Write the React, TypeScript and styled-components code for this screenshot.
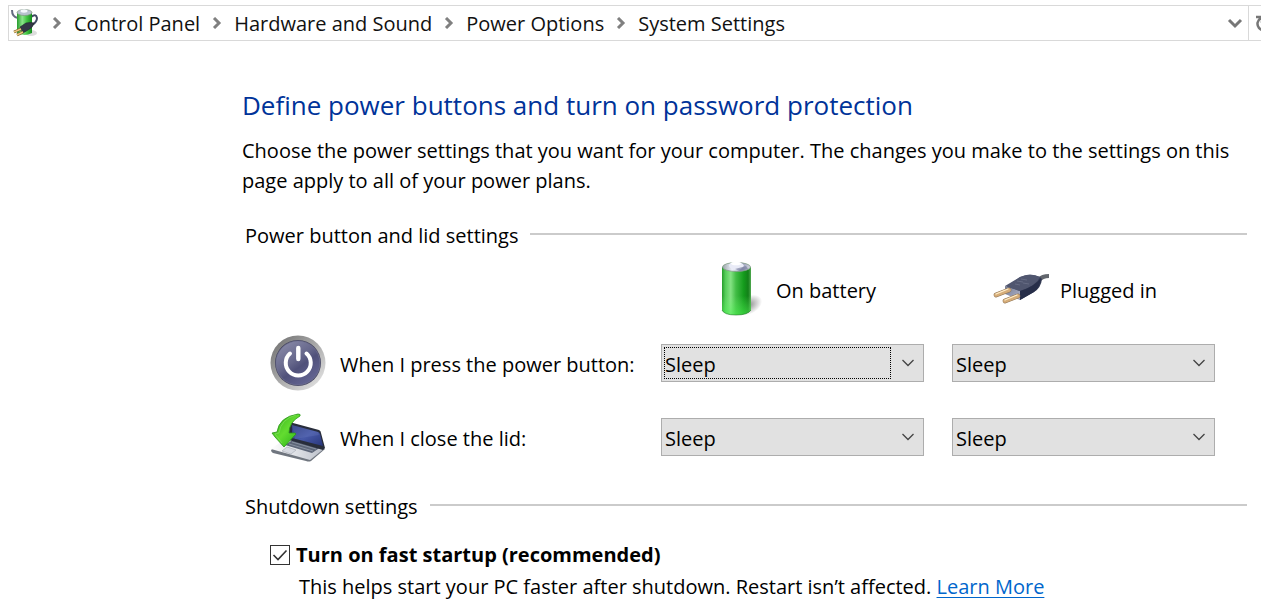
import React, { useState } from "react";
import styled, { createGlobalStyle } from "styled-components";

const GlobalStyle = createGlobalStyle`
  * { box-sizing: border-box; }
  body {
    margin: 0;
    background: #fff;
    color: #000;
    font-family: "Open Sans", "Noto Sans", sans-serif;
    font-size: 20px;
    line-height: 30px;
    overflow-x: hidden;
  }
  svg { flex: none; }
`;

const AddressBar = styled.nav`
  display: flex;
  align-items: stretch;
  height: 36px;
  margin: 5px 0 0 8px;
  border: 1px solid #d9d9d9;
  border-right: 0;
  overflow: hidden;
`;

const Trail = styled.ol`
  display: flex;
  flex: 1;
  align-items: center;
  min-width: 0;
  margin: 0;
  padding: 0 0 0 1px;
  list-style: none;
  white-space: nowrap;
`;

const Crumb = styled.li`
  display: flex;
  align-items: center;
`;

const CrumbLink = styled.a`
  padding-top: 2px;
  color: #111;
  text-decoration: none;
`;

const Separator = styled.svg`
  width: 10px;
  height: 12px;
  margin: 0 12px;
  fill: none;
  stroke: #808080;
  stroke-width: 3;
`;

const BarButton = styled.button<{ $width: number; $divided?: boolean }>`
  display: flex;
  flex: none;
  align-items: center;
  justify-content: ${(p) => (p.$divided ? "flex-start" : "center")};
  width: ${(p) => p.$width}px;
  padding: 0;
  overflow: hidden;
  border: 0;
  border-left: ${(p) => (p.$divided ? "1px solid #d9d9d9" : "0")};
  background: none;
  svg { margin-left: ${(p) => (p.$divided ? "6px" : "0")}; }
`;

const Main = styled.main`
  padding: 46px 14px 0 242px;
`;

const Title = styled.h1`
  margin: 0 0 13px;
  color: #003399;
  font-size: 26px;
  font-weight: 400;
  line-height: 36px;
`;

const Intro = styled.p`
  margin: 0;
`;

const Section = styled.section`
  margin-top: 25px;
`;

const SectionTitle = styled.h2`
  display: flex;
  align-items: center;
  gap: 12px;
  margin: 0;
  padding-left: 3px;
  font-size: 20px;
  font-weight: 400;
  &::after {
    content: "";
    flex: 1;
    height: 2px;
    margin-bottom: 4px;
    background: #cbcbcb;
  }
`;

const SettingsGrid = styled.div`
  display: grid;
  grid-template-columns: 363px 1fr 1fr;
  grid-auto-rows: 56px;
  align-items: center;
  gap: 18px 28px;
  padding: 10px 32px 2px 28px;
`;

const Source = styled.div<{ $indent: number; $gap: number }>`
  display: flex;
  align-items: center;
  gap: ${(p) => p.$gap}px;
  padding-left: ${(p) => p.$indent}px;
  span { padding-top: 4px; }
`;

const RowLabel = styled.div`
  display: flex;
  align-items: center;
  gap: 14px;
  white-space: nowrap;
  label { padding-top: 4px; }
`;

const SelectBox = styled.div`
  position: relative;
  svg {
    position: absolute;
    top: 13px;
    right: 9px;
    pointer-events: none;
  }
`;

const Select = styled.select`
  display: block;
  width: 100%;
  height: 38px;
  padding: 4px 32px 0 3px;
  appearance: none;
  border: 1px solid #adadad;
  border-radius: 0;
  outline: 0;
  background: #e1e1e1;
  color: #000;
  font: inherit;
`;

const FocusRing = styled.span`
  position: absolute;
  inset: 3px 33px 3px 3px;
  border: 1px dotted #000;
  pointer-events: none;
`;

const Option = styled.div`
  display: grid;
  grid-template-columns: 20px 1fr;
  align-items: center;
  gap: 2px 6px;
  padding: 18px 0 6px 28px;
`;

const CheckBox = styled.span`
  position: relative;
  display: block;
  height: 20px;
  svg {
    position: absolute;
    inset: 0;
    pointer-events: none;
  }
`;

const CheckInput = styled.input`
  display: block;
  width: 20px;
  height: 20px;
  margin: 0;
  appearance: none;
  border: 1px solid #333;
  background: #fff;
`;

const OptionLabel = styled.label`
  font-weight: 700;
`;

const Hint = styled.p`
  grid-column: 2;
  margin: 0;
  padding-left: 3px;
`;

const Link = styled.a`
  color: #0066cc;
  text-decoration-thickness: 1px;
  text-underline-offset: 3px;
`;

const PowerOptionsIcon = () => (
  <svg width="30" height="30" viewBox="0 0 30 30" aria-hidden="true">
    <defs>
      <linearGradient id="miniGreen">
        <stop offset="0" stopColor="#279c2e" />
        <stop offset=".35" stopColor="#8be58a" />
        <stop offset=".65" stopColor="#43c544" />
        <stop offset="1" stopColor="#138b1d" />
      </linearGradient>
    </defs>
    <ellipse cx="21" cy="25" rx="6" ry="3" fill="#ddd" />
    <path d="M2 2q0 7 6 8" fill="none" stroke="#656b82" strokeWidth="2" />
    <path d="M21 9q5-4 6 1 0 4-5 7" fill="none" stroke="#414963" strokeWidth="2" />
    <path d="M7 4v21q7 4 15 0V4z" fill="url(#miniGreen)" />
    <ellipse cx="14.500" cy="4.500" rx="7.500" ry="3" fill="#b8c2cf" stroke="#7c9580" strokeWidth=".7" />
    <ellipse cx="14" cy="3" rx="3.500" ry="1.700" fill="#f4f6fc" />
    <path d="M10 19l6-4q5-1 8 0-1 5-6 7l-5 3z" fill="#333745" stroke="#20242e" strokeWidth=".6" />
    <path d="M11 21l-7 3M13 24l-6 3" stroke="#765622" strokeWidth="2.600" />
    <path d="M11 21l-7 3M13 24l-6 3" stroke="#ecc980" strokeWidth="1.400" />
  </svg>
);

const BatteryIcon = () => (
  <svg width="42" height="56" viewBox="0 0 42 56" aria-hidden="true">
    <defs>
      <linearGradient id="cell">
        <stop offset="0" stopColor="#259c2b" />
        <stop offset=".12" stopColor="#55cd59" />
        <stop offset=".3" stopColor="#84e283" />
        <stop offset=".48" stopColor="#42bd46" />
        <stop offset=".75" stopColor="#149b1c" />
        <stop offset=".9" stopColor="#138019" />
        <stop offset="1" stopColor="#50a950" />
      </linearGradient>
      <linearGradient id="cellGlow" x1="0" y1="0" x2="0" y2="1">
        <stop offset=".6" stopColor="#6eff6e" stopOpacity="0" />
        <stop offset="1" stopColor="#4df551" stopOpacity=".55" />
      </linearGradient>
      <linearGradient id="cap">
        <stop offset="0" stopColor="#9ba6aa" />
        <stop offset=".35" stopColor="#eef0fa" />
        <stop offset=".7" stopColor="#9599b8" />
        <stop offset="1" stopColor="#d3d7df" />
      </linearGradient>
      <radialGradient id="cellShadow">
        <stop offset="0" stopColor="#555" stopOpacity=".65" />
        <stop offset="1" stopColor="#555" stopOpacity="0" />
      </radialGradient>
    </defs>
    <ellipse cx="28" cy="44" rx="14" ry="9" fill="url(#cellShadow)" transform="rotate(-28 28 44)" />
    <path d="M1 6v43q2 5 14 5t15-5V6z" fill="url(#cell)" />
    <path d="M1 6v43q2 5 14 5t15-5V6z" fill="url(#cellGlow)" />
    <path d="M1 49q2 5 14 5t15-5" fill="none" stroke="#257d2a" strokeOpacity=".6" />
    <ellipse cx="15.500" cy="6" rx="14" ry="4.500" fill="url(#cap)" stroke="#829c86" strokeWidth=".8" />
    <path d="M8 5q0-4 7-4t8 4q-3 4-8 4T8 5z" fill="#e9ebf7" />
    <path d="M14 8l11-3 2 3-8 2z" fill="#777c9c" opacity=".65" />
    <ellipse cx="15" cy="2.500" rx="5" ry="1.800" fill="#fff" />
  </svg>
);

const PlugIcon = () => (
  <svg width="56" height="34" viewBox="0 0 56 34" aria-hidden="true">
    <defs>
      <linearGradient id="plugBody" x1="0" y1="0" x2="1" y2="1">
        <stop offset="0" stopColor="#6b718c" />
        <stop offset=".45" stopColor="#404761" />
        <stop offset="1" stopColor="#20263d" />
      </linearGradient>
      <linearGradient id="plugFace" x1="0" y1="0" x2="1" y2="1">
        <stop offset="0" stopColor="#747b91" />
        <stop offset="1" stopColor="#b1b5cd" />
      </linearGradient>
    </defs>
    <path d="M45 6q3-4 11-4v4q-6 0-9 4z" fill="#62666d" />
    <path d="M12 16L27 5q11-4 20 0l2 2q-1 9-8 13L27 28z" fill="url(#plugBody)" />
    <path d="M12 14l15 5v9l-15-6z" fill="url(#plugFace)" />
    <path d="M12 14L27 5q10-5 20 0-4 9-20 14z" fill="#50566f" />
    <path d="M27 19q14-4 21-13-1 9-7 14l-14 8z" fill="#272e49" />
    <path d="M24 9l6 1m-2-3l6 1m-12 4l5 1m3-2l6 1" stroke="#666c84" strokeWidth="1" />
    <path d="M16 18L3 23M25 24l-13 5" stroke="#8e7354" strokeWidth="4.600" strokeLinecap="round" />
    <path d="M16 18L3 23M25 24l-13 5" stroke="#d6ad79" strokeWidth="3.600" strokeLinecap="round" />
    <path d="M15 17L3 22M24 23l-12 5" stroke="#ffedc9" strokeWidth="1.300" strokeLinecap="round" />
  </svg>
);

const PowerIcon = () => (
  <svg width="56" height="56" viewBox="0 0 56 56" aria-hidden="true">
    <defs>
      <linearGradient id="rim" x1=".1" y1=".1" x2=".9" y2=".9">
        <stop offset="0" stopColor="#777" />
        <stop offset=".5" stopColor="#aaa" />
        <stop offset="1" stopColor="#e0e0e0" />
      </linearGradient>
      <linearGradient id="face" x1=".1" y1="0" x2=".8" y2="1">
        <stop offset="0" stopColor="#8c8dab" />
        <stop offset=".45" stopColor="#66678b" />
        <stop offset=".6" stopColor="#50517a" />
        <stop offset="1" stopColor="#666796" />
      </linearGradient>
    </defs>
    <circle cx="28" cy="28" r="27.500" fill="url(#rim)" />
    <circle cx="28" cy="28" r="23" fill="#44445f" />
    <circle cx="28" cy="28" r="22" fill="url(#face)" stroke="#77799a" strokeWidth=".6" />
    <path d="M20 18.500a12.500 12.500 0 1 0 16.500 0" fill="none" stroke="#fff" strokeWidth="4" strokeLinecap="round" />
    <path d="M28.300 13v11" stroke="#fff" strokeWidth="4.400" strokeLinecap="round" />
  </svg>
);

const LidIcon = () => (
  <svg width="56" height="50" viewBox="0 0 56 50" aria-hidden="true">
    <defs>
      <linearGradient id="screen" x1="0" y1="0" x2="1" y2="1">
        <stop offset="0" stopColor="#2b397a" />
        <stop offset=".5" stopColor="#4759a8" />
        <stop offset="1" stopColor="#27357a" />
      </linearGradient>
      <linearGradient id="arrow" x1="0" y1="0" x2="1" y2="1">
        <stop offset="0" stopColor="#2fa919" />
        <stop offset=".5" stopColor="#63dc30" />
        <stop offset="1" stopColor="#20ad14" />
      </linearGradient>
      <linearGradient id="deck">
        <stop offset="0" stopColor="#fff" />
        <stop offset="1" stopColor="#b9bec8" />
      </linearGradient>
    </defs>
    <path d="M1 38l18-13 36 12-14 12q-2 1-5 0L3 41q-2-1-2-3z" fill="#70767f" />
    <path d="M1 37l18-13 36 12-15 12z" fill="url(#deck)" />
    <path d="M24 27l27 8-9 6-27-8z" fill="#5d6678" />
    <path d="M22 30l24 7M19 32l24 7" stroke="#9aa2b1" strokeWidth=".7" />
    <path d="M17 35l9 3-5 4-9-3z" fill="#d7dae1" stroke="#a4aab4" strokeWidth=".6" />
    <path d="M19 13q1-3 4-2l26 7q2 1 2 3l4 15-2 2-34-10z" fill="#282d3b" />
    <path d="M22 13l26 7q1 0 2 2l3 12-31-8z" fill="url(#screen)" />
    <path d="M22 13l26 7 1 3-24 4z" fill="#7285c4" opacity=".25" />
    <path d="M28 2Q9 5 7 20L2 21l3 4 9 10 12-13-1-1h-6Q19 10 30 4q1-2-2-2z" fill="url(#arrow)" stroke="#299419" strokeWidth=".8" />
    <path d="M26 3Q11 7 9 21l-4 1 7 9" fill="none" stroke="#7bdd57" strokeWidth=".8" />
  </svg>
);

const crumbs = ["Control Panel", "Hardware and Sound", "Power Options", "System Settings"];

const rows = [
  { id: "power", label: "When I press the power button:", icon: <PowerIcon /> },
  { id: "lid", label: "When I close the lid:", icon: <LidIcon /> },
];

const sources = ["On battery", "Plugged in"];

function ActionSelect({ label, id, focused }: { label: string; id?: string; focused?: boolean }) {
  return (
    <SelectBox>
      <Select id={id} aria-label={label} defaultValue="Sleep">
        <option>Do nothing</option>
        <option>Sleep</option>
        <option>Hibernate</option>
        <option>Shut down</option>
      </Select>
      {focused && <FocusRing />}
      <svg width="14" height="12" viewBox="0 0 14 12" aria-hidden="true">
        <path d="M1.500 3l5.500 5.500L12.500 3" fill="none" stroke="#444" strokeWidth="1.300" />
      </svg>
    </SelectBox>
  );
}

export default function App() {
  const [fast, setFast] = useState(true);
  return (
    <>
      <GlobalStyle />
      <AddressBar aria-label="Address">
        <Trail>
          <Crumb><PowerOptionsIcon /></Crumb>
          {crumbs.map((c) => (
            <Crumb key={c}>
              <Separator viewBox="0 0 10 12" aria-hidden="true"><path d="M2 1l5 5-5 5" /></Separator>
              <CrumbLink href="#">{c}</CrumbLink>
            </Crumb>
          ))}
        </Trail>
        <BarButton $width={26} aria-label="Previous locations">
          <svg width="16" height="12" viewBox="0 0 16 12">
            <path d="M2 3l6 6 6-6" fill="none" stroke="#777" strokeWidth="3" />
          </svg>
        </BarButton>
        <BarButton $width={13} $divided aria-label="Refresh">
          <svg width="18" height="18" viewBox="0 0 18 18">
            <path d="M6 4a6.500 6.500 0 1 0 6 0M1 3h6v6" fill="none" stroke="#777" strokeWidth="2.500" />
          </svg>
        </BarButton>
      </AddressBar>
      <Main>
        <Title>Define power buttons and turn on password protection</Title>
        <Intro>
          Choose the power settings that you want for your computer. The changes you make to the settings on this
          page apply to all of your power plans.
        </Intro>
        <Section>
          <SectionTitle>Power button and lid settings</SectionTitle>
          <SettingsGrid>
            <span />
            <Source $indent={60} $gap={13}><BatteryIcon /><span>On battery</span></Source>
            <Source $indent={41} $gap={11}><PlugIcon /><span>Plugged in</span></Source>
            {rows.map((row) => (
              <React.Fragment key={row.id}>
                <RowLabel>
                  {row.icon}
                  <label htmlFor={row.id}>{row.label}</label>
                </RowLabel>
                {sources.map((s, i) => (
                  <ActionSelect
                    key={s}
                    id={i === 0 ? row.id : undefined}
                    label={`${row.label} ${s}`}
                    focused={row.id === "power" && i === 0}
                  />
                ))}
              </React.Fragment>
            ))}
          </SettingsGrid>
        </Section>
        <Section>
          <SectionTitle>Shutdown settings</SectionTitle>
          <Option>
            <CheckBox>
              <CheckInput id="fast" type="checkbox" checked={fast} onChange={(e) => setFast(e.target.checked)} />
              {fast && (
                <svg width="20" height="20" viewBox="0 0 20 20" aria-hidden="true">
                  <path d="M3.500 10l4.500 4.500L16.500 5.500" fill="none" stroke="#333" strokeWidth="1.600" />
                </svg>
              )}
            </CheckBox>
            <OptionLabel htmlFor="fast">Turn on fast startup (recommended)</OptionLabel>
            <Hint>
              This helps start your PC faster after shutdown. Restart isn’t affected. <Link href="#">Learn More</Link>
            </Hint>
          </Option>
        </Section>
      </Main>
    </>
  );
}
